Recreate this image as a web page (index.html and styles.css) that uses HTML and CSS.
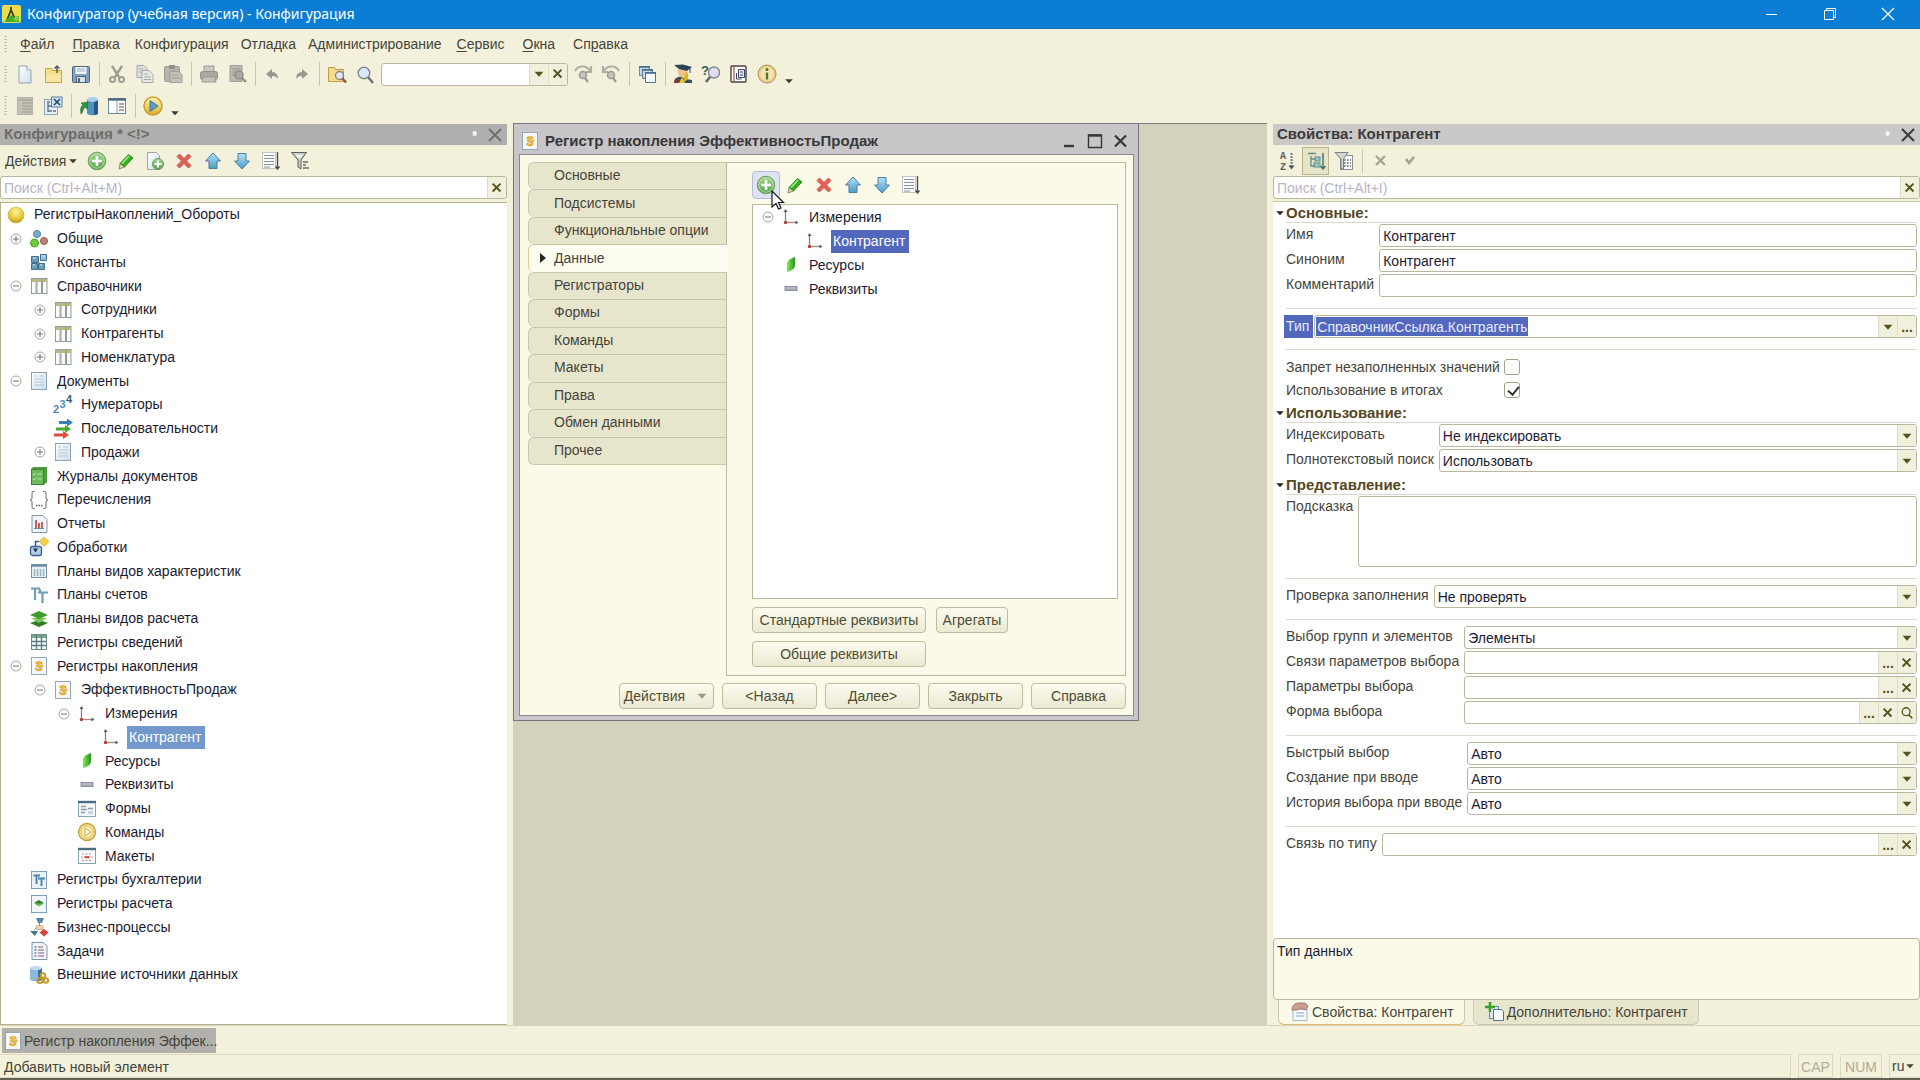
FILE: index.html
```html
<!DOCTYPE html>
<html lang="ru">
<head>
<meta charset="utf-8">
<title>Конфигуратор (учебная версия) - Конфигурация</title>
<link rel="stylesheet" href="styles.css">
</head>
<body>
<svg class="defs" aria-hidden="true">
  <defs>
    <linearGradient id="gGreen" x1="0" y1="0" x2="0" y2="1"><stop offset="0" stop-color="#a9d892"/><stop offset="1" stop-color="#4fa346"/></linearGradient>
    <linearGradient id="gBlue" x1="0" y1="0" x2="0" y2="1"><stop offset="0" stop-color="#b5e2f5"/><stop offset="1" stop-color="#4b9bcb"/></linearGradient>
    <linearGradient id="gGold" x1="0" y1="0" x2="0" y2="1"><stop offset="0" stop-color="#fff3b0"/><stop offset="1" stop-color="#dfae2c"/></linearGradient>
    <linearGradient id="gPage" x1="0" y1="0" x2="1" y2="1"><stop offset="0" stop-color="#ffffff"/><stop offset="1" stop-color="#cfdfec"/></linearGradient>
    <radialGradient id="gBall" cx=".5" cy=".3" r=".7"><stop offset="0" stop-color="#fff6a8"/><stop offset=".6" stop-color="#e8c93a"/><stop offset="1" stop-color="#b99a1c"/></radialGradient>
    <linearGradient id="gLeaf" x1="0" y1="0" x2="1" y2="0"><stop offset="0" stop-color="#7df04a"/><stop offset="1" stop-color="#2a8f1e"/></linearGradient>
  </defs>
  <symbol id="logo" viewBox="0 0 20 20"><rect x="0" y="1" width="19" height="18" rx="2" fill="#e9dd4c"/><path d="M9 3v3M9 6 5 16M9 6l4 9" stroke="#3b3a12" stroke-width="1.8" fill="none"/><path d="M2 18 9 11l4 3 4-2v6z" fill="#3fae2d"/><circle cx="14.500" cy="14.500" r="2.500" fill="#7ed348"/></symbol>
  <symbol id="new" viewBox="0 0 20 20"><path d="M4 2h8l4 4v13H4z" fill="url(#gPage)" stroke="#8ea4b8"/><path d="M12 2v4h4" fill="#fff" stroke="#8ea4b8"/></symbol>
  <symbol id="open" viewBox="0 0 20 20"><path d="M2.500 4.500h6l1 2h9v12h-16z" fill="#f5dd84" stroke="#c3a44a"/><path d="M3 10h15v8H3z" fill="#f9e6a0"/><path d="M14 9V2M11.500 4.500 14 2l2.500 2.500" stroke="#52606e" stroke-width="1.500" fill="none"/></symbol>
  <symbol id="save" viewBox="0 0 20 20"><rect x="1.500" y="2.500" width="17" height="16" rx="1" fill="#84a0b8" stroke="#4b6780"/><rect x="4.500" y="3" width="11" height="7" fill="#eef4f8"/><path d="M6 5h8M6 7h8" stroke="#9fb2c2"/><rect x="5.500" y="12.500" width="9" height="6" fill="#d5e0e8" stroke="#4b6780"/><rect x="7" y="14" width="2" height="4" fill="#4b6780"/></symbol>
  <symbol id="cut" viewBox="0 0 20 20"><path d="M5 2l7 11M15 2 8 13" stroke="#9d9d94" stroke-width="2.400" fill="none"/><circle cx="5.500" cy="15.500" r="2.500" fill="none" stroke="#9d9d94" stroke-width="2"/><circle cx="14.500" cy="15.500" r="2.500" fill="none" stroke="#9d9d94" stroke-width="2"/></symbol>
  <symbol id="copy" viewBox="0 0 20 20"><path d="M2 1.500h7l3 3v9H2z" fill="#dfe0da" stroke="#a4a8a6"/><path d="M7 6.500h7l4 4v8H7z" fill="#e9eae6" stroke="#a4a8a6"/><path d="M9 10h4M9 13h7M9 15.500h7M4 5h4M4 8h3" stroke="#a4a8a6"/></symbol>
  <symbol id="paste" viewBox="0 0 20 20"><rect x="1.500" y="2.500" width="15" height="15" rx="1" fill="#b4b4ac" stroke="#9e9e97"/><rect x="6" y="1" width="6" height="4" fill="#91918b"/><path d="M7 7.500h8l4 3v8H7z" fill="#c2c2ba" stroke="#9e9e97"/><path d="M9 11h6M9 14h8" stroke="#9e9e97"/></symbol>
  <symbol id="print" viewBox="0 0 20 20"><path d="M5 2h10v6H5z" fill="#c9c9c2" stroke="#999992"/><rect x="1.500" y="7.500" width="17" height="8" rx="2" fill="#a9a9a2" stroke="#92928b"/><path d="M4 13h12l1 5H3z" fill="#c4c4bc" stroke="#999992"/></symbol>
  <symbol id="preview" viewBox="0 0 20 20"><path d="M3 1.500h12v16H3z" fill="#b9b9b2" stroke="#a0a099"/><path d="M5 5h8M5 8h4M5 11h3" stroke="#94948d"/><circle cx="12" cy="11" r="4" fill="#a9a9a2" stroke="#8d8d87" stroke-width="1.500"/><path d="m15 14 4 4" stroke="#8d8d87" stroke-width="2.400"/></symbol>
  <symbol id="undo" viewBox="0 0 20 20"><path d="M3 10 9 5v3c4 0 6 3 6 7-1-2-3-3-6-3v3z" fill="#989890"/></symbol>
  <symbol id="redo" viewBox="0 0 20 20"><path d="M17 10l-6-5v3c-4 0-6 3-6 7 1-2 3-3 6-3v3z" fill="#989890"/></symbol>
  <symbol id="ffind" viewBox="0 0 20 20"><path d="M1.500 3.500h6l1 2h8v12h-15z" fill="#f3dc8c" stroke="#b79d4a"/><circle cx="12.500" cy="11.500" r="4" fill="#dfe9fa" stroke="#8a7f72" stroke-width="1.300"/><path d="m15.500 14.500 3.500 4" stroke="#8f4c33" stroke-width="2.200"/></symbol>
  <symbol id="zoom" viewBox="0 0 20 20"><circle cx="9" cy="9" r="5.800" fill="#dbe6fb" stroke="#818a94" stroke-width="1.400"/><path d="m13 13 5 6" stroke="#6f7278" stroke-width="2.400"/></symbol>
  <symbol id="fnext" viewBox="0 0 20 20"><path d="M2 7c3-6 12-6 15 0M18 2v6h-5" stroke="#b0b0a8" stroke-width="2.200" fill="none"/><circle cx="10" cy="11" r="3.500" fill="#c6c6be" stroke="#9a9a93" stroke-width="1.500"/><path d="m12 14 3 4" stroke="#9a9a93" stroke-width="2.200"/></symbol>
  <symbol id="fprev" viewBox="0 0 20 20"><path d="M18 7C15 1 6 1 3 7M2 2v6h5" stroke="#b0b0a8" stroke-width="2.200" fill="none"/><circle cx="10" cy="11" r="3.500" fill="#c6c6be" stroke="#9a9a93" stroke-width="1.500"/><path d="m12 14 3 4" stroke="#9a9a93" stroke-width="2.200"/></symbol>
  <symbol id="wins" viewBox="0 0 20 20"><path d="M2.500 2.500h10v9h-10z" fill="#c7d8e4" stroke="#6a8ba3"/><path d="M5.500 5.500h10v9h-10z" fill="#c7d8e4" stroke="#5b7f9a"/><path d="M8.500 8.500h10v10h-10z" fill="#f5f9fb" stroke="#4a7594"/><path d="M2 3h11M5 6h11M8 9h11" stroke="#3e6a8a" stroke-width="1.600"/></symbol>
  <symbol id="student" viewBox="0 0 20 20"><circle cx="9" cy="8" r="4.500" fill="#f0c08e"/><path d="M1 1l9-.5L19 3l-5 4-8-2z" fill="#2c4258"/><path d="M17 3v6" stroke="#2c4258"/><path d="M1 19c0-5 4-7 8-6l4 2 6 1v3z" fill="#3c4e5c"/><path d="M9 13l3 6H6z" fill="#e0c63a"/><path d="M14 7c1 3 2 5 1 8l-5 4 1-6z" fill="#d8b82a"/><path d="M3 14l3 5H1z" fill="#a82b20"/></symbol>
  <symbol id="syntax" viewBox="0 0 20 20"><rect x="2" y="2" width="15" height="16" rx="1" fill="#fff" stroke="#503f46" stroke-width="1.400"/><path d="M5 2v16" stroke="#a05c58" stroke-width="1.300"/><path d="M9.500 5.500h6v8h-6z" fill="#e3e8f2" stroke="#384866"/><path d="M7.500 9v6h5M11 8h3M11 11h3" stroke="#384866" fill="none"/></symbol>
  <symbol id="info" viewBox="0 0 20 20"><circle cx="10" cy="10" r="9" fill="#edcf8e" stroke="#a98f5c"/><circle cx="10" cy="10" r="6.500" fill="#f7e4b5"/><circle cx="10" cy="5.500" r="1.500" fill="#4f7a1b"/><path d="M10 8.500v7" stroke="#4f7a1b" stroke-width="2.400"/></symbol>
  <symbol id="cfgopen" viewBox="0 0 20 20"><rect x="2.500" y="1.500" width="15" height="17" fill="#c3c2b8" stroke="#b3b2a8"/><path d="M3 4h14M7 7h10M7 10h10M7 13h10M7 16h10" stroke="#9d9c94"/></symbol>
  <symbol id="cfgclose" viewBox="0 0 20 20"><rect x="1.500" y="3.500" width="13" height="15" fill="#e8eef3" stroke="#8ea3b4"/><path d="M4 6h3M5 7v9M5 10h4M5 15h4M10 10h3M10 15h3" stroke="#55718a" stroke-width="1.300"/><rect x="8.500" y="1" width="10.500" height="10" fill="#d2e3f1" stroke="#5a80a0"/><path d="m11 3 6 6M17 3l-6 6" stroke="#1d4567" stroke-width="1.600"/></symbol>
  <symbol id="dbupd" viewBox="0 0 20 20"><path d="M8 3v14c0 3 11 3 11 0V3z" fill="#4f90be"/><path d="M15 4v15c3 0 4-1 4-2V3z" fill="#235a85"/><ellipse cx="13.500" cy="3.500" rx="5.500" ry="2.500" fill="#a6d0ea"/><path d="M2 18c-1-5 0-8 2-9L2 7l7-1-1 7-2-2c-2 2-2 5-4 7z" fill="#2f9641" stroke="#1c6a2c" stroke-width=".6"/></symbol>
  <symbol id="dbtab" viewBox="0 0 20 20"><rect x="1.500" y="2.500" width="17" height="15" fill="#fbfcfd" stroke="#6f899d"/><path d="M1 3.500h18" stroke="#4c6a82" stroke-width="2.400"/><path d="M10 5v12" stroke="#86a0b3"/><path d="M12 8h5M12 11h5M12 14h5" stroke="#a0807e" stroke-width="1.300"/></symbol>
  <symbol id="play" viewBox="0 0 20 20"><circle cx="10" cy="10" r="9" fill="url(#gGold)" stroke="#c8a038" stroke-width="1.500"/><path d="M7 4.500 15 10 7 15.500z" fill="#5ba0c0" stroke="#3a7594"/></symbol>
  <symbol id="add" viewBox="0 0 20 20"><circle cx="10" cy="10" r="8.800" fill="url(#gGreen)" stroke="#6f9c64" stroke-width="1"/><circle cx="10" cy="10" r="7.200" fill="none" stroke="#c7e6b8" stroke-width=".8"/><path d="M10 5v10M5 10h10" stroke="#fff" stroke-width="2.600"/></symbol>
  <symbol id="pencil" viewBox="0 0 20 20"><path d="M12.500 3.500 17 7 8.500 16 4 12.500z" fill="#35ac22" stroke="#207612" stroke-width=".8"/><path d="M13 5 6 12.500" stroke="#a4ee7c" stroke-width="1.600"/><path d="M4 12.500 8.500 16 3 18z" fill="#cfd6a0" stroke="#4a6a2a" stroke-width=".6"/></symbol>
  <symbol id="addpage" viewBox="0 0 20 20"><path d="M2.500 1.500h9l3 3v14h-12z" fill="url(#gPage)" stroke="#a0a59d"/><circle cx="13" cy="13" r="5.500" fill="url(#gGreen)" stroke="#6f9c64"/><path d="M13 9.500v7M9.500 13h7" stroke="#fff" stroke-width="2"/></symbol>
  <symbol id="del" viewBox="0 0 20 20"><path d="M5.500 3 10 7.500 14.500 3 17 5.500 12.500 10 17 14.500 14.500 17 10 12.500 5.500 17 3 14.500 7.500 10 3 5.500z" fill="#e0605a" stroke="#c2453f" stroke-width=".8"/></symbol>
  <symbol id="up" viewBox="0 0 20 20"><path d="M10 2 17.500 10H14v7.500H6V10H2.500z" fill="url(#gBlue)" stroke="#477f9f"/></symbol>
  <symbol id="down" viewBox="0 0 20 20"><path d="M10 18 17.500 10H14V2.500H6V10H2.500z" fill="url(#gBlue)" stroke="#477f9f"/></symbol>
  <symbol id="list" viewBox="0 0 20 20"><rect x="1.500" y="1.500" width="13" height="16" fill="#fafafa" stroke="#c3c6c6"/><path d="M3 4.500h10M3 7.500h10M3 10.500h10M3 13.500h10M3 16h6" stroke="#8b9196"/><path d="M16.500 1v17M14.500 15.500l2 2.500 2-2.500" stroke="#40484e" stroke-width="1.300" fill="none"/></symbol>
  <symbol id="filter" viewBox="0 0 20 20"><path d="M1.500 1.500h15L11 9v9l-3-2V9z" fill="#c8cac6" stroke="#5b5f5a"/><path d="M5 3.500h8L9.500 8z" fill="#f2f3f0"/><path d="M13 11h5M13 14h3M13 17h6" stroke="#6b6e6a" stroke-width="1.300"/></symbol>
  <symbol id="root" viewBox="0 0 20 20"><circle cx="10" cy="10" r="8" fill="url(#gBall)" stroke="#c7ab3a" stroke-width=".6"/></symbol>
  <symbol id="common" viewBox="0 0 20 20"><circle cx="8" cy="5" r="3.600" fill="#7aa9c8" stroke="#5b89a8"/><circle cx="5.500" cy="14" r="4" fill="#6bcd3c" stroke="#49a226"/><circle cx="15" cy="12" r="3.600" fill="#b98378" stroke="#95645b"/></symbol>
  <symbol id="const" viewBox="0 0 20 20"><g fill="#6d9dbd" stroke="#40708f"><path d="M2.500 4.500h7v6h-7z"/><path d="M2.500 11.500h6v6h-6z"/><path d="M9.500 11.500h6v6h-6z"/><path d="M11.500 2.500h6v6h-6z" fill="#9cc0d6"/></g><path d="M4 6h3M13 4h3M4 13h2M11 13h2" stroke="#d6e8f2"/></symbol>
  <symbol id="cat" viewBox="0 0 20 20"><rect x="2.500" y="2.500" width="4.500" height="15" fill="#fbfbf6" stroke="#8f9ca5"/><rect x="8" y="2.500" width="4.500" height="15" fill="#fbfbf6" stroke="#8f9ca5"/><rect x="13.500" y="2.500" width="4.500" height="15" fill="#fbfbf6" stroke="#8f9ca5"/><path d="M2.500 4.500h4.500M8 4.500h4.500M13.500 4.500H18" stroke="#b9bb77" stroke-width="3"/></symbol>
  <symbol id="doc" viewBox="0 0 20 20"><rect x="2.500" y="1.500" width="15" height="17" fill="url(#gPage)" stroke="#8ba3b5"/><path d="M5 5h3M10 5h5M5 8h10M5 11h10M5 14h10" stroke="#b4c5d2"/></symbol>
  <symbol id="seq" viewBox="0 0 20 20"><path d="M6 2.500h8V0l6 4-6 4V5.500H6z" transform="translate(0 -.5)" fill="#3d7fb0"/><path d="M3 8.500h9V6l6 4-6 4v-2.500H3z" fill="#47a832"/><path d="M1 14.500h9V12l6 4-6 4v-2.500H1z" fill="#d8503f"/></symbol>
  <symbol id="journal" viewBox="0 0 20 20"><path d="M2 3l2-2h14v15l-3 3H2z" fill="#4f9c3f"/><rect x="2.500" y="3.500" width="12" height="15" fill="#6dbb5a" stroke="#3f8433"/><path d="m4 8 1 1 2-2M4 13l1 1 2-2M8.500 8h4M8.500 13h4" stroke="#b9e0aa" fill="none"/></symbol>
  <symbol id="enum" viewBox="0 0 20 20"><path d="M6 1.500H4Q3 2 3 4v4L1.500 10 3 11.500V16q0 2 1 2.500h2M14 1.500h2q1 .5 1 2.500v4l1.500 2-1.500 1.500V16q0 2-1 2.500h-2" stroke="#7f8790" stroke-width="1.200" fill="none"/><path d="M7 15.500h1.500M9.500 15.500H11M12 15.500h1.500" stroke="#59626c" stroke-width="1.500"/></symbol>
  <symbol id="report" viewBox="0 0 20 20"><path d="M3 1.500h11l4 4v13H3z" fill="#f1f5f9" stroke="#8296a8"/><path d="M7 14V6M10 14V9M13 14V8" stroke="#c3544b" stroke-width="1.800"/><path d="M5 14.500h10" stroke="#74859a"/></symbol>
  <symbol id="proc" viewBox="0 0 20 20"><path d="m15 0 5 4.500-5 5-5-5z" fill="#f2d04c" stroke="#cda728" stroke-width=".7"/><path d="M10 4.500H6.500V14" stroke="#3b5877" stroke-width="1.500" fill="none"/><rect x="1.500" y="9.500" width="11" height="9" rx="2" fill="#b4cbe6" stroke="#3b5f92" stroke-width="1.300"/><path d="M4 11.500h5L6.500 15.500z" fill="#1f3350"/></symbol>
  <symbol id="pvh" viewBox="0 0 20 20"><rect x="2.500" y="3.500" width="15" height="13" fill="#e9f0f4" stroke="#7793a6"/><path d="M2 4.500h16" stroke="#6c8ca3" stroke-width="2.400"/><path d="M5.500 8v7M8.500 8v7M11.500 8v7M14.500 8v7" stroke="#9db4c2" stroke-width="1.500"/></symbol>
  <symbol id="acc" viewBox="0 0 20 20"><path d="M2 3.500h9M6 3v12M9 7.500h10M13.500 7v11M11 4v4" stroke="#6f9cb8" stroke-width="2.200" fill="none"/></symbol>
  <symbol id="calc" viewBox="0 0 20 20"><path d="M1 14l9-3 9 3-9 4z" fill="#2f7d1f"/><path d="M2 9h16l-8 5z" fill="#79c95c"/><path d="M1 6l9-4 9 4-9 4z" fill="#3f9c2a"/></symbol>
  <symbol id="ireg" viewBox="0 0 20 20"><rect x="2.500" y="2.500" width="15" height="15" fill="#f4f8f6" stroke="#6c8d80"/><path d="M3 4.500h14" stroke="#79a88f" stroke-width="3"/><path d="M7.500 3v14M12.500 3v14M3 9.500h14M3 13.500h14" stroke="#5d7d86" stroke-width="1.300"/></symbol>
  <symbol id="accum" viewBox="0 0 20 20"><rect x="2.500" y="1.500" width="15" height="17" fill="#f6f7f5" stroke="#94a6b6"/><g fill="#edbf35" stroke="#c08f28" stroke-width=".5"><path d="M6.500 12q3.500 2.200 6.500 0v1.800q-3 2.400-6.500 0z"/><path d="M7.500 8.700q3.500 2.200 6.500 0v1.800q-3 2.400-6.500 0z"/><ellipse cx="10" cy="7" rx="3.300" ry="1.400"/></g></symbol>
  <symbol id="dims" viewBox="0 0 20 20"><path d="M4.500 15.500V4" stroke="#9b7a80" stroke-width="1.300"/><path d="M4.500 15.500H15" stroke="#b08484" stroke-width="1.300"/><path d="M4.500 2 6.500 5h-4zM17.500 15.500l-3-2v4z" fill="#53606c"/><circle cx="4.500" cy="15.500" r="1.700" fill="#a8443d"/></symbol>
  <symbol id="res" viewBox="0 0 20 20"><path d="M6 17V8q1-4 8-6v9q-1 4-8 6z" fill="url(#gLeaf)"/></symbol>
  <symbol id="attr" viewBox="0 0 20 20"><rect x="4" y="7.500" width="12" height="4" fill="#a3a9bb" stroke="#8d93a3"/><path d="M5.500 9h9" stroke="#c7cad4"/></symbol>
  <symbol id="forms" viewBox="0 0 20 20"><rect x="1.500" y="2.500" width="17" height="15" fill="#f5f8fa" stroke="#8ba4b5"/><path d="M1 3h18" stroke="#4c6c84" stroke-width="2.400"/><path d="M4 7.500h5M4 10.500h6M4 13.500h4M11 9.500h5" stroke="#8d9ca7" stroke-width="1.300"/><rect x="11" y="12" width="5" height="3" fill="#c8d4dc"/></symbol>
  <symbol id="cmd" viewBox="0 0 20 20"><circle cx="10" cy="10" r="8.500" fill="#f3df88" stroke="#c3a138" stroke-width="1.300"/><circle cx="10" cy="10" r="6" fill="#f8edba" stroke="#dcc574"/><path d="M8 6l6 4-6 4z" fill="#fffdf0" stroke="#d0ab45"/></symbol>
  <symbol id="mak" viewBox="0 0 20 20"><rect x="1.500" y="2.500" width="17" height="15" fill="#fbfbfc" stroke="#8ba4b5"/><path d="M1 3h18" stroke="#4c6c84" stroke-width="2.400"/><path d="M5 8h10M5 14.500h10" stroke="#b08f99" stroke-width="1.200" stroke-dasharray="2 1.500"/><path d="M7.500 11.200h5" stroke="#cc3f3c" stroke-width="2"/><path d="M5 10v2.500M15 10v2.500" stroke="#c99"/></symbol>
  <symbol id="areg" viewBox="0 0 20 20"><rect x="2.500" y="1.500" width="15" height="17" fill="#e7f1f8" stroke="#7fa0b8"/><path d="M4.500 5.500H11M7.500 5v9M9 8.500h7M12.500 8v8" stroke="#4f84a8" stroke-width="1.900" fill="none"/></symbol>
  <symbol id="creg" viewBox="0 0 20 20"><rect x="2.500" y="1.500" width="15" height="17" fill="#f1f6f9" stroke="#7fa0b8"/><path d="M5 9l5-3 5 3-5 2z" fill="#2f7d2a"/><path d="M5 9.500h10l-5 3z" fill="#6fbd5a"/></symbol>
  <symbol id="bp" viewBox="0 0 20 20"><path d="M7 1h8l-2 5H9z" fill="#5489a5"/><path d="M10.500 6v7M5 13l5-4 5 4" stroke="#8c8a84" fill="none"/><rect x="7" y="8.500" width="7" height="4" rx="1.500" fill="#ecd3a9" stroke="#b79a71" stroke-width=".7"/><path d="M1 14h8l-3 5z" fill="#3f7a85"/><path d="m15 12 4.500 3.500L15 19.500l-4.500-4z" fill="#d4453b"/></symbol>
  <symbol id="task" viewBox="0 0 20 20"><path d="M3 1.500h11l4 3.500v13.500H3z" fill="#eff4fa" stroke="#8296ab"/><path d="M5.500 6h2M5.500 9h2M5.500 12h2M5.500 15h2" stroke="#5d80b0" stroke-width="1.500"/><path d="M9 6h5M9 9h6M9 12h6M9 15h6" stroke="#b58c94" stroke-width="1.300"/></symbol>
  <symbol id="ext" viewBox="0 0 20 20"><path d="M1 3v11c0 3 10 3 12 1V3z" fill="#8fbbdb"/><path d="M9 3v13l4-1V3z" fill="#39719a"/><ellipse cx="7" cy="3" rx="6" ry="2" fill="#c0dcee"/><g fill="none" stroke="#c39a2c" stroke-width="2"><circle cx="14" cy="10.500" r="2.200"/><circle cx="11" cy="15.500" r="2.600"/><circle cx="17" cy="15.500" r="2.200"/></g></symbol>
  <symbol id="bycat" viewBox="0 0 20 20"><path d="M2 2.500h8M5 5v3h6M5 8v7h5" stroke="#5b8f88" stroke-width="1.300" fill="none"/><rect x="9" y="6" width="5" height="4" fill="#9cc9c2" stroke="#5b8f88"/><rect x="8" y="12" width="6" height="4" fill="#9cc9c2" stroke="#5b8f88"/><path d="M17 2v15M14.500 15l2.500 3 2.500-3" stroke="#3f6f70" stroke-width="1.400" fill="none"/></symbol>
  <symbol id="fpage" viewBox="0 0 20 20"><rect x="6.500" y="4.500" width="12" height="14" fill="#f8f8f6" stroke="#8b8f92"/><path d="M10 9h7M10 12h7M10 15h7" stroke="#5d6267" stroke-width="1.500" stroke-dasharray="1.500 1.500"/><path d="M1 1.500h13L9.500 8v10H7V8z" fill="#d4d6d4" stroke="#7c8184"/></symbol>
  <symbol id="tprop" viewBox="0 0 20 20"><path d="M3 7.500h14v11H3z" fill="#f6f8fb" stroke="#a4b4c9"/><path d="M6 11h8M6 14h8" stroke="#8ba6cf"/><path d="M2 7c1-5 4-6 7-6h6l3 3-2 4-5-2-4 2H2z" fill="#c9a08f" stroke="#a5796a"/></symbol>
  <symbol id="tadd" viewBox="0 0 20 20"><rect x="4.500" y="4.500" width="9" height="12" fill="#dae6f2" stroke="#6a8aab"/><path d="M8.500 7.500h8l2 2v9h-10z" fill="#fafcfe" stroke="#4d7095"/><path d="M5 0v10M0 5h10" stroke="#37a02a" stroke-width="2.600"/></symbol>
  <symbol id="plus" viewBox="0 0 16 16"><circle cx="8" cy="8" r="5" fill="#fff" stroke="#a5a5a0"/><path d="M5 8h6M8 5v6" stroke="#6e6e6a"/></symbol>
  <symbol id="minus" viewBox="0 0 16 16"><circle cx="8" cy="8" r="5" fill="#fff" stroke="#a5a5a0"/><path d="M5 8h6" stroke="#6e6e6a"/></symbol>
  <symbol id="x" viewBox="0 0 16 16"><path d="m3 3 9 9M12 3l-9 9" stroke="currentColor" stroke-width="2.200" fill="none"/></symbol>
  <symbol id="caret" viewBox="0 0 16 16"><path d="M3 5.500h10L8 11z" fill="currentColor"/></symbol>
  <symbol id="loupe" viewBox="0 0 16 16"><circle cx="7" cy="6.500" r="4.500" fill="none" stroke="currentColor" stroke-width="1.500"/><path d="m10 10 4 4" stroke="currentColor" stroke-width="2"/></symbol>
  <symbol id="pin" viewBox="0 0 16 16"><path d="M5 3h4q3 2 0 6H5z" fill="#f4f4f2"/></symbol>
</svg>

<header class="titlebar">
  <svg class="ico"><use href="#logo"/></svg>
  <h1>Конфигуратор (учебная версия) - Конфигурация</h1>
  <div class="sysbtns">
    <button aria-label="Свернуть"><svg viewBox="0 0 16 16"><path d="M2 8.500h11" stroke="#fff"/></svg></button>
    <button aria-label="Восстановить"><svg viewBox="0 0 16 16"><path d="M2.500 4.500h9v9h-9zM4.500 4V2.500h9v9H12" stroke="#fff" fill="none"/></svg></button>
    <button aria-label="Закрыть"><svg viewBox="0 0 16 16"><path d="m2 2 12 12M14 2 2 14" stroke="#fff" stroke-width="1.300"/></svg></button>
  </div>
</header>

<nav class="menu grip">
  <button class="key"><u>Ф</u>айл</button><button class="key"><u>П</u>равка</button><button>Конфигурация</button><button>Отладка</button><button>Администрирование</button><button class="key"><u>С</u>ервис</button><button class="key"><u>О</u>кна</button><button class="key">Сп<u>р</u>авка</button>
</nav>

<div class="toolbar grip">
  <button aria-label="Новый"><svg class="ico"><use href="#new"/></svg></button>
  <button aria-label="Открыть"><svg class="ico"><use href="#open"/></svg></button>
  <button aria-label="Сохранить"><svg class="ico"><use href="#save"/></svg></button>
  <i class="sep"></i>
  <button aria-label="Вырезать"><svg class="ico"><use href="#cut"/></svg></button>
  <button aria-label="Копировать"><svg class="ico"><use href="#copy"/></svg></button>
  <button aria-label="Вставить"><svg class="ico"><use href="#paste"/></svg></button>
  <i class="sep"></i>
  <button aria-label="Печать"><svg class="ico"><use href="#print"/></svg></button>
  <button aria-label="Просмотр"><svg class="ico"><use href="#preview"/></svg></button>
  <i class="sep"></i>
  <button aria-label="Отменить"><svg class="ico"><use href="#undo"/></svg></button>
  <button aria-label="Вернуть"><svg class="ico"><use href="#redo"/></svg></button>
  <i class="sep"></i>
  <button aria-label="Глобальный поиск"><svg class="ico"><use href="#ffind"/></svg></button>
  <button aria-label="Найти"><svg class="ico"><use href="#zoom"/></svg></button>
  <div class="field quick"><input type="text" aria-label="Строка поиска"><button class="fb" aria-label="Список"><svg><use href="#caret"/></svg></button><button class="fb" aria-label="Очистить"><svg><use href="#x"/></svg></button></div>
  <button aria-label="Найти далее"><svg class="ico"><use href="#fnext"/></svg></button>
  <button aria-label="Найти ранее"><svg class="ico"><use href="#fprev"/></svg></button>
  <i class="sep"></i>
  <button aria-label="Окна"><svg class="ico"><use href="#wins"/></svg></button>
  <i class="sep"></i>
  <button aria-label="Учебная версия"><svg class="ico"><use href="#student"/></svg></button>
  <button aria-label="Поиск в справке"><svg class="ico" viewBox="0 0 20 20"><text x="0" y="11" font-family="Liberation Sans" font-weight="bold" font-size="13" fill="#2d5b4c">?</text><circle cx="13" cy="8.500" r="5.500" fill="#e4ddf2" stroke="#7c8791" stroke-width="1.400"/><path d="m9 13-4 5" stroke="#5c676f" stroke-width="2.600"/></svg></button>
  <button aria-label="Синтакс-помощник"><svg class="ico"><use href="#syntax"/></svg></button>
  <button aria-label="О программе"><svg class="ico"><use href="#info"/></svg></button>
  <button class="more" aria-label="Ещё"><svg><use href="#caret"/></svg></button>
</div>

<div class="toolbar second grip">
  <button aria-label="Открыть конфигурацию"><svg class="ico"><use href="#cfgopen"/></svg></button>
  <button aria-label="Закрыть конфигурацию"><svg class="ico"><use href="#cfgclose"/></svg></button>
  <i class="sep"></i>
  <button aria-label="Обновить базу данных"><svg class="ico"><use href="#dbupd"/></svg></button>
  <button aria-label="Таблица"><svg class="ico"><use href="#dbtab"/></svg></button>
  <i class="sep"></i>
  <button aria-label="Начать отладку"><svg class="ico"><use href="#play"/></svg></button>
  <button class="more" aria-label="Ещё"><svg><use href="#caret"/></svg></button>
</div>

<main class="workspace">
  <section class="panel">
    <header class="phead inactive"><h2>Конфигурация * &lt;!&gt;</h2><svg class="pin"><use href="#pin"/></svg><button aria-label="Закрыть панель"><svg viewBox="0 0 16 16"><path d="m2 2 12 12M14 2 2 14" stroke="currentColor" stroke-width="1.800"/></svg></button></header>
    <div class="ptools">
      <button class="actions">Действия<svg><use href="#caret"/></svg></button>
      <button aria-label="Добавить"><svg class="ico"><use href="#add"/></svg></button>
      <button aria-label="Изменить"><svg class="ico"><use href="#pencil"/></svg></button>
      <button aria-label="Скопировать"><svg class="ico"><use href="#addpage"/></svg></button>
      <button aria-label="Удалить"><svg class="ico"><use href="#del"/></svg></button>
      <button aria-label="Вверх"><svg class="ico"><use href="#up"/></svg></button>
      <button aria-label="Вниз"><svg class="ico"><use href="#down"/></svg></button>
      <button aria-label="Упорядочить"><svg class="ico"><use href="#list"/></svg></button>
      <button aria-label="Отбор"><svg class="ico"><use href="#filter"/></svg></button>
    </div>
    <div class="field search"><input type="text" placeholder="Поиск (Ctrl+Alt+M)" aria-label="Поиск по конфигурации"><button class="fb" aria-label="Очистить"><svg><use href="#x"/></svg></button></div>
    <ul class="tree cfg">
      <li class="root"><svg class="ico"><use href="#root"/></svg><span>РегистрыНакоплений_Обороты</span></li>
      <li><svg class="exp"><use href="#plus"/></svg><svg class="ico"><use href="#common"/></svg><span>Общие</span></li>
      <li><i class="exp"></i><svg class="ico"><use href="#const"/></svg><span>Константы</span></li>
      <li><svg class="exp"><use href="#minus"/></svg><svg class="ico"><use href="#cat"/></svg><span>Справочники</span></li>
      <li class="l1"><svg class="exp"><use href="#plus"/></svg><svg class="ico"><use href="#cat"/></svg><span>Сотрудники</span></li>
      <li class="l1"><svg class="exp"><use href="#plus"/></svg><svg class="ico"><use href="#cat"/></svg><span>Контрагенты</span></li>
      <li class="l1"><svg class="exp"><use href="#plus"/></svg><svg class="ico"><use href="#cat"/></svg><span>Номенклатура</span></li>
      <li><svg class="exp"><use href="#minus"/></svg><svg class="ico"><use href="#doc"/></svg><span>Документы</span></li>
      <li class="l1"><i class="exp"></i><svg class="ico" viewBox="0 0 20 20"><g font-family="Liberation Sans" font-weight="bold" fill="#5a87a6"><text x="0" y="18" font-size="11">2</text><text x="6.500" y="13" font-size="11" fill="#4b90bd">3</text><text x="13" y="8" font-size="11" fill="#3c5a76">4</text></g></svg><span>Нумераторы</span></li>
      <li class="l1"><i class="exp"></i><svg class="ico"><use href="#seq"/></svg><span>Последовательности</span></li>
      <li class="l1"><svg class="exp"><use href="#plus"/></svg><svg class="ico"><use href="#doc"/></svg><span>Продажи</span></li>
      <li><i class="exp"></i><svg class="ico"><use href="#journal"/></svg><span>Журналы документов</span></li>
      <li><i class="exp"></i><svg class="ico"><use href="#enum"/></svg><span>Перечисления</span></li>
      <li><i class="exp"></i><svg class="ico"><use href="#report"/></svg><span>Отчеты</span></li>
      <li><i class="exp"></i><svg class="ico"><use href="#proc"/></svg><span>Обработки</span></li>
      <li><i class="exp"></i><svg class="ico"><use href="#pvh"/></svg><span>Планы видов характеристик</span></li>
      <li><i class="exp"></i><svg class="ico"><use href="#acc"/></svg><span>Планы счетов</span></li>
      <li><i class="exp"></i><svg class="ico"><use href="#calc"/></svg><span>Планы видов расчета</span></li>
      <li><i class="exp"></i><svg class="ico"><use href="#ireg"/></svg><span>Регистры сведений</span></li>
      <li><svg class="exp"><use href="#minus"/></svg><svg class="ico"><use href="#accum"/></svg><span>Регистры накопления</span></li>
      <li class="l1"><svg class="exp"><use href="#minus"/></svg><svg class="ico"><use href="#accum"/></svg><span>ЭффективностьПродаж</span></li>
      <li class="l2"><svg class="exp"><use href="#minus"/></svg><svg class="ico"><use href="#dims"/></svg><span>Измерения</span></li>
      <li class="l3"><i class="exp"></i><svg class="ico"><use href="#dims"/></svg><span class="sel soft">Контрагент</span></li>
      <li class="l2"><i class="exp"></i><svg class="ico"><use href="#res"/></svg><span>Ресурсы</span></li>
      <li class="l2"><i class="exp"></i><svg class="ico"><use href="#attr"/></svg><span>Реквизиты</span></li>
      <li class="l2"><i class="exp"></i><svg class="ico"><use href="#forms"/></svg><span>Формы</span></li>
      <li class="l2"><i class="exp"></i><svg class="ico"><use href="#cmd"/></svg><span>Команды</span></li>
      <li class="l2"><i class="exp"></i><svg class="ico"><use href="#mak"/></svg><span>Макеты</span></li>
      <li><i class="exp"></i><svg class="ico"><use href="#areg"/></svg><span>Регистры бухгалтерии</span></li>
      <li><i class="exp"></i><svg class="ico"><use href="#creg"/></svg><span>Регистры расчета</span></li>
      <li><i class="exp"></i><svg class="ico"><use href="#bp"/></svg><span>Бизнес-процессы</span></li>
      <li><i class="exp"></i><svg class="ico"><use href="#task"/></svg><span>Задачи</span></li>
      <li><i class="exp"></i><svg class="ico"><use href="#ext"/></svg><span>Внешние источники данных</span></li>
    </ul>
  </section>

  <section class="mdi">
    <div class="window">
      <header class="whead">
        <svg class="ico"><use href="#accum"/></svg>
        <h2>Регистр накопления ЭффективностьПродаж</h2>
        <button aria-label="Свернуть"><svg viewBox="0 0 16 16"><path d="M3 13h10" stroke="currentColor" stroke-width="2.400"/></svg></button>
        <button aria-label="Развернуть"><svg viewBox="0 0 16 16"><path d="M1.500 2h13v12.500h-13z" stroke="currentColor" stroke-width="1.400" fill="none"/><path d="M1 2.500h14" stroke="currentColor" stroke-width="2.400"/></svg></button>
        <button aria-label="Закрыть"><svg viewBox="0 0 16 16"><path d="m2 2.500 11 11M13 2.500l-11 11" stroke="currentColor" stroke-width="2.200"/></svg></button>
      </header>
      <div class="wbody">
        <div class="editor">
          <div class="tabs">
            <button>Основные</button><button>Подсистемы</button><button>Функциональные опции</button><button class="on">Данные</button><button>Регистраторы</button><button>Формы</button><button>Команды</button><button>Макеты</button><button>Права</button><button>Обмен данными</button><button>Прочее</button>
          </div>
          <div class="page">
            <div class="etools">
              <button class="hot" aria-label="Добавить"><svg class="ico"><use href="#add"/></svg><svg class="cursor" viewBox="0 0 14 20"><path d="M1 1v16l4-3.500 2.500 5.500 2.500-1-2.500-5.500h5z" fill="#fff" stroke="#16161c" stroke-width="1.200"/></svg></button>
              <button aria-label="Изменить"><svg class="ico"><use href="#pencil"/></svg></button>
              <button aria-label="Удалить"><svg class="ico"><use href="#del"/></svg></button>
              <button aria-label="Вверх"><svg class="ico"><use href="#up"/></svg></button>
              <button aria-label="Вниз"><svg class="ico"><use href="#down"/></svg></button>
              <button aria-label="Упорядочить"><svg class="ico"><use href="#list"/></svg></button>
            </div>
            <ul class="tree data">
              <li><svg class="exp"><use href="#minus"/></svg><svg class="ico"><use href="#dims"/></svg><span>Измерения</span></li>
              <li class="l1"><i class="exp"></i><svg class="ico"><use href="#dims"/></svg><span class="sel">Контрагент</span></li>
              <li><i class="exp"></i><svg class="ico"><use href="#res"/></svg><span>Ресурсы</span></li>
              <li><i class="exp"></i><svg class="ico"><use href="#attr"/></svg><span>Реквизиты</span></li>
            </ul>
            <div class="pbtns">
              <button class="btn">Стандартные реквизиты</button><button class="btn">Агрегаты</button><button class="btn">Общие реквизиты</button>
            </div>
          </div>
        </div>
        <footer class="wfoot">
          <button class="btn drop">Действия<svg><use href="#caret"/></svg></button><button class="btn">&lt;Назад</button><button class="btn">Далее&gt;</button><button class="btn">Закрыть</button><button class="btn">Справка</button>
        </footer>
      </div>
    </div>
  </section>

  <section class="panel props">
    <header class="phead"><h2>Свойства: Контрагент</h2><svg class="pin"><use href="#pin"/></svg><button aria-label="Закрыть панель"><svg viewBox="0 0 16 16"><path d="m2 2 12 12M14 2 2 14" stroke="currentColor" stroke-width="2"/></svg></button></header>
    <div class="ptools">
      <button aria-label="По алфавиту"><svg class="ico" viewBox="0 0 20 20"><g font-family="Liberation Mono" font-weight="bold" font-size="10" fill="#606060"><text x="2" y="8">A</text><text x="2" y="19">Z</text></g><path d="M13.500 2v14" stroke="#777a80" stroke-width="2" stroke-dasharray="2 1"/><path d="M10.500 14.500h6l-3 4z" fill="#4e5660"/></svg></button>
      <button class="pressed" aria-label="По категориям"><svg class="ico"><use href="#bycat"/></svg></button>
      <button aria-label="Только важные"><svg class="ico"><use href="#fpage"/></svg></button>
      <i class="sep"></i>
      <button class="dim" aria-label="Отменить"><svg><use href="#x"/></svg></button>
      <button class="dim" aria-label="Применить"><svg viewBox="0 0 16 16"><path d="m4 6 3 4 5-6" stroke="currentColor" stroke-width="2.600" fill="none"/></svg></button>
    </div>
    <div class="field search"><input type="text" placeholder="Поиск (Ctrl+Alt+I)" aria-label="Поиск по свойствам"><button class="fb" aria-label="Очистить"><svg><use href="#x"/></svg></button></div>
    <form class="form">
      <h3><svg><use href="#caret"/></svg><span>Основные:</span></h3>
      <div class="grp">
        <label for="f1">Имя</label><div class="field"><input id="f1" type="text" value="Контрагент"></div>
        <label for="f2">Синоним</label><div class="field"><input id="f2" type="text" value="Контрагент"></div>
        <label for="f3">Комментарий</label><div class="field"><input id="f3" type="text"></div>
      </div>
      <hr>
      <div class="grp type">
        <label for="f4">Тип</label><div class="field"><input id="f4" class="picked" type="text" value="СправочникСсылка.Контрагенты"><button type="button" class="fb" aria-label="Список"><svg><use href="#caret"/></svg></button><button type="button" class="fb dots">...</button></div>
      </div>
      <hr>
      <div class="grp checks">
        <label for="f5">Запрет незаполненных значений</label><input id="f5" type="checkbox">
        <label for="f6">Использование в итогах</label><input id="f6" type="checkbox" checked>
      </div>
      <h3><svg><use href="#caret"/></svg><span>Использование:</span></h3>
      <div class="grp">
        <label for="f7">Индексировать</label><div class="field"><select id="f7"><option>Не индексировать</option></select><span class="fb"><svg><use href="#caret"/></svg></span></div>
        <label for="f8">Полнотекстовый поиск</label><div class="field"><select id="f8"><option>Использовать</option></select><span class="fb"><svg><use href="#caret"/></svg></span></div>
      </div>
      <h3><svg><use href="#caret"/></svg><span>Представление:</span></h3>
      <div class="grp">
        <label for="f9">Подсказка</label><textarea id="f9" class="field"></textarea>
      </div>
      <hr>
      <div class="grp">
        <label for="f10">Проверка заполнения</label><div class="field"><select id="f10"><option>Не проверять</option></select><span class="fb"><svg><use href="#caret"/></svg></span></div>
      </div>
      <hr>
      <div class="grp">
        <label for="f11">Выбор групп и элементов</label><div class="field"><select id="f11"><option>Элементы</option></select><span class="fb"><svg><use href="#caret"/></svg></span></div>
        <label for="f12">Связи параметров выбора</label><div class="field"><input id="f12" type="text"><button type="button" class="fb dots">...</button><button type="button" class="fb" aria-label="Очистить"><svg><use href="#x"/></svg></button></div>
        <label for="f13">Параметры выбора</label><div class="field"><input id="f13" type="text"><button type="button" class="fb dots">...</button><button type="button" class="fb" aria-label="Очистить"><svg><use href="#x"/></svg></button></div>
        <label for="f14">Форма выбора</label><div class="field"><input id="f14" type="text"><button type="button" class="fb dots">...</button><button type="button" class="fb" aria-label="Очистить"><svg><use href="#x"/></svg></button><button type="button" class="fb" aria-label="Открыть"><svg><use href="#loupe"/></svg></button></div>
      </div>
      <hr>
      <div class="grp">
        <label for="f15">Быстрый выбор</label><div class="field"><select id="f15"><option>Авто</option></select><span class="fb"><svg><use href="#caret"/></svg></span></div>
        <label for="f16">Создание при вводе</label><div class="field"><select id="f16"><option>Авто</option></select><span class="fb"><svg><use href="#caret"/></svg></span></div>
        <label for="f17">История выбора при вводе</label><div class="field"><select id="f17"><option>Авто</option></select><span class="fb"><svg><use href="#caret"/></svg></span></div>
      </div>
      <hr>
      <div class="grp">
        <label for="f18">Связь по типу</label><div class="field"><input id="f18" type="text"><button type="button" class="fb dots">...</button><button type="button" class="fb" aria-label="Очистить"><svg><use href="#x"/></svg></button></div>
      </div>
    </form>
    <div class="hint">Тип данных</div>
    <div class="ptabs"><button class="on"><svg class="ico"><use href="#tprop"/></svg>Свойства: Контрагент</button><button><svg class="ico"><use href="#tadd"/></svg>Дополнительно: Контрагент</button></div>
  </section>
</main>

<div class="taskbar"><button><svg class="ico"><use href="#accum"/></svg><span>Регистр накопления Эффек...</span></button></div>
<footer class="status"><span class="msg">Добавить новый элемент</span><span class="off">CAP</span><span class="off">NUM</span><span class="lang">ru<svg><use href="#caret"/></svg></span></footer>
</body>
</html>
```
FILE: styles.css
```css
* { box-sizing: border-box; }
body {
  margin: 0;
  min-height: 100vh;
  display: flex;
  flex-direction: column;
  background: #f3f1dc;
  color: #45443a;
  font: 14px/18px "Liberation Sans", Arial, sans-serif;
  border-bottom: 2px solid #5f5f52;
}
button, input, select, textarea { font: inherit; color: inherit; margin: 0; padding: 0; border: 0; background: none; outline: 0; }
button { display: flex; align-items: center; justify-content: center; }
h1, h2, h3, ul { margin: 0; padding: 0; font: inherit; list-style: none; }
svg { width: 16px; height: 16px; flex: none; display: block; }
.defs { position: absolute; width: 0; height: 0; }
.ico { width: 20px; height: 20px; }

/* title bar */
.titlebar { display: flex; align-items: center; height: 29px; padding: 0 3px 0 2px; gap: 5px; background: #0b7dd4; border-bottom: 1px solid #0a6cb9; color: #fff; }
.titlebar h1 { flex: 1; font: 14px/20px "Noto Sans", "Open Sans", sans-serif; }
.sysbtns { display: flex; }
.sysbtns button { width: 58px; height: 28px; }

/* menu and toolbars */
.grip { position: relative; }
.grip::before { content: ""; position: absolute; left: 4px; top: 7px; bottom: 7px; width: 3px; background: repeating-linear-gradient(#c4c1ab 0 1px, transparent 1px 3px); }
.menu { display: flex; align-items: center; gap: 2px; height: 30px; padding-left: 12px; }
.menu button { padding: 0 5px; height: 22px; display: block; }
.menu .key { padding: 0 8px; }
.menu u { text-underline-offset: 2px; }
.toolbar { display: flex; align-items: center; height: 30px; padding-left: 11px; }
.toolbar.second { height: 34px; }
.toolbar > button { width: 28px; height: 26px; }
.toolbar > .more { width: 16px; align-items: flex-end; color: #3a3a30; }
.more svg { width: 12px; height: 12px; }
.sep { flex: none; width: 8px; height: 24px; background: linear-gradient(#c9c6b0, #c9c6b0) 4px 0 / 1px 100% no-repeat; }
.field { display: flex; min-width: 0; height: 23px; border: 1px solid #b9b79d; border-radius: 3px; background: #fff; overflow: hidden; }
.field input, .field select { flex: 1; min-width: 0; padding: 0 3px; color: #1b1b33; appearance: none; background: transparent; }
.fb { flex: none; width: 19px; display: flex; align-items: center; justify-content: center; background: #f1f0dc; border-left: 1px solid #dfddc6; color: #55521f; }
.fb svg { width: 14px; height: 14px; }
.dots { font-weight: bold; align-items: flex-end; padding-bottom: 1px; }
.quick { width: 187px; margin: 0 1px 0 2px; }

/* three-part work area */
.workspace { flex: 1; display: grid; grid-template-columns: 507fr 754fr 647fr; gap: 6px; min-height: 0; }
.panel { display: flex; flex-direction: column; min-width: 0; padding-top: 1px; }
.phead { display: flex; align-items: center; height: 21px; padding: 0 4px; background: #cbc8c8; color: #3b3b3b; }
.phead h2 { flex: 1; font-size: 15px; line-height: 17px; font-weight: bold; padding-bottom: 2px; }
.phead.inactive { background: #afafad; color: #6c6c6a; }
.phead button { width: 16px; }
.pin { margin-right: 5px; width: 14px; height: 12px; }
.ptools { display: flex; align-items: center; height: 31px; }
.ptools > button { width: 29px; height: 28px; }
.ptools > .actions { width: 82px; padding-left: 5px; justify-content: flex-start; }
.actions svg { width: 12px; height: 12px; margin-left: 1px; color: #3a3a30; }
.search input::placeholder { color: #b9b3c6; opacity: 1; }
.search { flex: none; }

/* trees */
.tree { background: #fff; border: 1px solid #b5b18f; color: #1b1b30; display: flex; flex-direction: column; }
.tree li { display: flex; align-items: center; padding-left: 7px; min-height: 0; }
.tree .l1 { padding-left: 31px; }
.tree .l2 { padding-left: 55px; }
.tree .l3 { padding-left: 79px; }
.tree .root { padding-left: 5px; }
.exp { width: 16px; height: 16px; flex: none; }
.tree .ico { margin: 0 6px 0 5px; }
.tree .root .ico { margin-left: 0; }
.tree span { padding: 0 4px 0 2px; line-height: 23px; white-space: nowrap; }
.tree .sel { background: #5268bd; color: #fff; }
.tree .soft { background: #7398cb; }
.cfg { flex: 1; margin-top: 3px; padding-bottom: 37px; border-right: 0; }
.cfg li { flex: 1 1 0; }

/* document area */
.mdi { position: relative; background: #d4d1bc; border-top: 1px solid #7c7b78; }
.window { position: absolute; left: 0; top: -1px; width: 626px; background: #c8c6c8; border: 1px solid #77767a; padding: 0 4px 4px 5px; }
.whead { display: flex; align-items: center; height: 30px; padding: 4px 0 0 1px; color: #38383a; }
.whead h2 { flex: 1; margin-left: 5px; font-size: 15px; font-weight: bold; }
.whead button { width: 26px; height: 24px; }
.wbody { background: #fbfae8; border: 1px solid #8a898c; padding: 7px 7px 6px 8px; }
.editor { display: flex; }
.tabs { flex: none; width: 198px; height: 303px; display: flex; flex-direction: column; }
.tabs button { flex: 1; justify-content: flex-start; padding: 0 0 2px 25px; background: #e8e5cd; border: 1px solid #cac7a9; border-width: 1px 0 0 1px; border-radius: 6px 0 0 6px; }
.tabs button:last-child { border-bottom-width: 1px; }
.tabs .on { position: relative; z-index: 1; margin-right: -1px; background: #fdfcf0; border-left-color: #e3c88a; }
.tabs .on::before { content: ""; position: absolute; left: 11px; top: 8px; border: 5px solid transparent; border-left: 6px solid #26261e; border-right: 0; }
.page { flex: 1; display: flex; flex-direction: column; height: 514px; border: 1px solid #bcb99b; padding: 8px 7px 8px 25px; }
.etools { display: flex; height: 28px; margin-bottom: 5px; }
.etools button { width: 29px; height: 28px; position: relative; }
.etools .hot { width: 28px; background: #dfe4f3; border: 1px solid #b3bbd8; border-radius: 4px; }
.cursor { position: absolute; left: 18px; top: 18px; width: 14px; height: 20px; z-index: 2; }
.data { flex: 1; border-color: #b9b79d; }
.data li { height: 24px; }
.pbtns { display: grid; grid-template-columns: 174px 72px; gap: 8px 10px; margin-top: 8px; }
.btn { height: 26px; border: 1px solid #bdba9d; border-radius: 4px; background: linear-gradient(#fcfbf0, #ebe9d2); color: #4f4c30; white-space: nowrap; }
.wfoot { display: flex; justify-content: flex-end; gap: 8px; margin-top: 7px; }
.wfoot .btn { width: 95px; }
.drop svg { margin-left: 10px; width: 14px; height: 14px; color: #9c9a80; }

/* properties */
.props .ptools .pressed { border: 1px solid #b9b68f; background: #e6e3c6; width: 27px; }
.props .dim { color: #a5a290; }
.form { flex: 1; display: flex; flex-direction: column; margin-top: 2px; border-top: 1px solid #c9c7a4; background: #fff; padding: 0 3px 0 13px; }
.form h3 { display: flex; align-items: center; height: 21px; margin: 0 0 1px -12px; font-weight: bold; color: #55471f; }
.form h3 svg { width: 12px; height: 12px; color: #26261e; }
.form h3 span { flex: 1; font-size: 15px; line-height: 19px; border-bottom: 1px solid #d9d8cf; }
.grp { display: grid; grid-template-columns: max-content 1fr; gap: 2px 5px; margin-bottom: 2px; }
.grp label { line-height: 20px; white-space: nowrap; }
.form hr { width: 100%; margin: 9px 0 6px; border: 0; height: 1px; background: #dbd9cb; }
.grp textarea { height: 71px; resize: none; display: block; width: 100%; }
.grp.type { gap: 1px; }
.type label { margin-left: -2px; padding: 0 4px 0 2px; background: #5268bd; color: #e9ecff; line-height: 22px; }
.type .field .picked { flex: none; width: 212px; height: 19px; margin: 1px auto 0 1px; padding: 0 1px; background: #5268bd; color: #e9ecff; }
.grp.checks { gap: 0 4px; margin: 0; }
.checks label { line-height: 23px; }
.checks input { appearance: none; width: 16px; height: 16px; margin-top: 3px; border: 1px solid #a3a28c; border-radius: 3px; background: #fff; }
.checks input:checked { position: relative; }
.checks input:checked::after { content: ""; position: absolute; left: 5px; top: 1px; width: 5px; height: 9px; border: solid #33332c; border-width: 0 2px 2px 0; transform: rotate(40deg); }
.hint { height: 62px; padding: 3px; border: 1px solid #b9b79d; border-radius: 4px; background: #fbfae9; color: #1b1b33; }
.ptabs { display: flex; gap: 8px; padding: 0 5px; height: 25px; }
.ptabs button { height: 25px; padding: 0 10px 0 11px; gap: 2px; border: 1px solid #cdcaae; border-top: 0; border-radius: 0 0 6px 6px; background: #e8e5cd; white-space: nowrap; }
.ptabs .on { background: #fbfae9; border-bottom-color: #dcb877; }

/* bottom bars */
.taskbar { height: 29px; padding: 2px; border-top: 1px solid #d8d5bd; }
.taskbar button { width: 214px; height: 25px; padding: 0 2px 0 1px; gap: 1px; justify-content: flex-start; background: #b1b0aa; }
.taskbar span { white-space: nowrap; }
.status { display: flex; gap: 7px; height: 24px; }
.status span { border: 1px solid #dcd9c0; padding: 0 4px; line-height: 24px; }
.status .msg { flex: 1; border-left: 0; }
.status .off { width: 42px; padding: 0; text-align: center; color: #b0ac92; }
.status .off:nth-child(2) { width: 35px; }
.status .lang { display: flex; align-items: center; width: 31px; border-right: 0; padding-left: 2px; }
.lang svg { width: 12px; height: 12px; }
```
